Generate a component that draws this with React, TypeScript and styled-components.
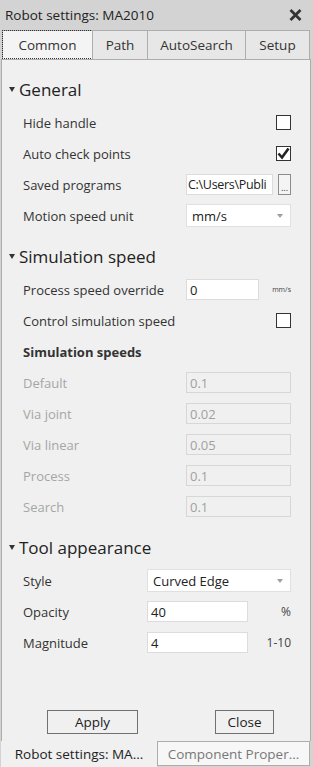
import React from "react";
import styled, { createGlobalStyle } from "styled-components";

const GlobalStyle = createGlobalStyle`
    html, body {
        margin: 0;
        padding: 0;
        background: #d3d3d3;
    }
    * {
        box-sizing: border-box;
    }
`;

const FONT = `"Open Sans", "Noto Sans", sans-serif`;

const Window = styled.div`
    display: flex;
    flex-direction: column;
    width: 313px;
    height: 767px;
    background: #d3d3d3;
    font-family: ${FONT};
    color: #333;
    overflow: hidden;
`;
const TitleBar = styled.div`
    display: flex;
    align-items: center;
    justify-content: space-between;
    height: 29px;
    padding: 0 11px 0 5px;
    font-size: 13.5px;
    color: #222;
`;
const TabStrip = styled.div`
    display: flex;
    align-items: flex-end;
    height: 30px;
    padding-left: 2px;
`;
const Tab = styled.div<{ $w: number; $active?: boolean }>`
    display: flex;
    align-items: center;
    justify-content: center;
    width: ${p => p.$w}px;
    height: 29px;
    font-size: 13.5px;
    color: #333;
    background: ${p => (p.$active ? "#f4f4f4" : "#e7e7e7")};
    border: 1px solid #adadad;
    border-bottom: none;
    margin-left: -1px;
    outline: ${p => (p.$active ? "1px dotted #333" : "none")};
    outline-offset: -1px;
    &:first-child {
        margin-left: 0;
    }
`;
const Panel = styled.div`
    display: flex;
    flex-direction: column;
    flex: 1;
    margin: 0 2px 0 1px;
    padding: 16px 19px 7px 0;
    background: #f0f0f0;
    border: 1px solid #adadad;
    border-bottom: none;
`;
const SectionHeader = styled.div<{ $first?: boolean }>`
    display: flex;
    align-items: center;
    height: 27px;
    margin-top: ${p => (p.$first ? 0 : 12)}px;
    margin-bottom: 4px;
    padding-left: 7px;
    font-size: 17px;
    color: #222;
`;
const Caret = styled.span`
    width: 0;
    height: 0;
    margin-right: 4px;
    border-left: 3.5px solid transparent;
    border-right: 3.5px solid transparent;
    border-top: 5px solid #333;
`;
const Row = styled.div<{ $cw: number }>`
    display: grid;
    grid-template-columns: 1fr ${p => p.$cw}px;
    align-items: center;
    height: 31px;
    padding-left: 21px;
`;
const Label = styled.span<{ $dim?: boolean; $bold?: boolean }>`
    font-size: 13px;
    font-weight: ${p => (p.$bold ? 700 : 400)};
    color: ${p => (p.$dim ? "#a6a6a6" : "#333")};
    white-space: nowrap;
`;
const Controls = styled.div`
    display: flex;
    align-items: center;
    justify-content: space-between;
    gap: 5px;
`;
const TextBox = styled.div<{ $w?: number; $disabled?: boolean; $tight?: boolean }>`
    display: flex;
    align-items: center;
    width: ${p => (p.$w ? `${p.$w}px` : "100%")};
    height: 21px;
    padding: 0 ${p => (p.$tight ? 1 : 3)}px;
    font-size: ${p => (p.$tight ? 12.5 : 13)}px;
    letter-spacing: ${p => (p.$tight ? "-0.3px" : "normal")};
    color: ${p => (p.$disabled ? "#a0a0a0" : "#222")};
    background: ${p => (p.$disabled ? "#f0f0f0" : "#fff")};
    border: 1px solid ${p => (p.$disabled ? "#d7d7d7" : "#dcdcdc")};
    white-space: nowrap;
    overflow: hidden;
`;
const Select = styled.div`
    display: flex;
    align-items: center;
    justify-content: space-between;
    width: 100%;
    height: 23px;
    padding: 0 7px 0 5px;
    font-size: 13px;
    color: #222;
    background: #fff;
    border: 1px solid #e0e0e0;
`;
const SelectArrow = styled.span`
    width: 0;
    height: 0;
    border-left: 3.5px solid transparent;
    border-right: 3.5px solid transparent;
    border-top: 4px solid #a0a0a0;
`;
const Browse = styled.div`
    display: flex;
    align-items: flex-end;
    justify-content: center;
    width: 13px;
    height: 21px;
    padding-bottom: 2px;
    font-size: 9px;
    line-height: 9px;
    color: #333;
    background: #f4f4f4;
    border: 1px solid #8c8c8c;
`;
const CheckBox = styled.div`
    display: flex;
    align-items: center;
    justify-content: center;
    width: 15px;
    height: 15px;
    margin-left: auto;
    background: #fff;
    border: 1px solid #333;
`;
const Unit = styled.span<{ $small?: boolean }>`
    font-size: ${p => (p.$small ? 7 : 12)}px;
    color: #444;
    white-space: nowrap;
`;
const Footer = styled.div`
    display: flex;
    align-items: center;
    margin-top: auto;
    padding-left: 45px;
    gap: 77px;
`;
const Button = styled.div<{ $w: number }>`
    display: flex;
    align-items: center;
    justify-content: center;
    width: ${p => p.$w}px;
    height: 24px;
    font-size: 13.5px;
    color: #222;
    background: #f0f0f0;
    border: 1px solid #707070;
`;
const BottomTabs = styled.div`
    display: flex;
    height: 26px;
    padding-right: 3px;
`;
const BottomTab = styled.div<{ $active?: boolean }>`
    display: flex;
    align-items: center;
    justify-content: center;
    height: ${p => (p.$active ? 26 : 25)}px;
    font-size: 13.5px;
    color: ${p => (p.$active ? "#222" : "#777")};
    background: ${p => (p.$active ? "#f0f0f0" : "#f7f7f7")};
    border: ${p => (p.$active ? "none" : "1px solid #adadad")};
    flex: ${p => (p.$active ? "0 0 156px" : "1")};
    margin-left: ${p => (p.$active ? "1px" : "0")};
    white-space: nowrap;
`;

function CloseIcon() {
    return (
        <svg width="13" height="12" viewBox="0 0 13 12">
            <path d="M1.5 1 L11.5 11 M11.5 1 L1.5 11" stroke="#333" strokeWidth="2.8" />
        </svg>
    );
}

function CheckMark() {
    return (
        <svg width="13" height="13" viewBox="0 0 13 13">
            <path d="M1.5 6.5 L5 10.5 L11.5 1.5" fill="none" stroke="#222" strokeWidth="2.6" />
        </svg>
    );
}

function Header({ title, first }: { title: string; first?: boolean }) {
    return (
        <SectionHeader $first={first}>
            <Caret />
            {title}
        </SectionHeader>
    );
}

const speeds = [
    { label: "Default", value: "0.1" },
    { label: "Via joint", value: "0.02" },
    { label: "Via linear", value: "0.05" },
    { label: "Process", value: "0.1" },
    { label: "Search", value: "0.1" }
];

export default function App() {
    return (
        <>
            <GlobalStyle />
            <Window>
                <TitleBar>
                    <span>Robot settings: MA2010</span>
                    <CloseIcon />
                </TitleBar>
                <TabStrip>
                    <Tab $w={91} $active>Common</Tab>
                    <Tab $w={56}>Path</Tab>
                    <Tab $w={99}>AutoSearch</Tab>
                    <Tab $w={65}>Setup</Tab>
                </TabStrip>
                <Panel>
                    <Header title="General" first />
                    <Row $cw={105}>
                        <Label>Hide handle</Label>
                        <CheckBox />
                    </Row>
                    <Row $cw={105}>
                        <Label>Auto check points</Label>
                        <CheckBox>
                            <CheckMark />
                        </CheckBox>
                    </Row>
                    <Row $cw={105}>
                        <Label>Saved programs</Label>
                        <Controls>
                            <TextBox $w={87} $tight>C:\Users\Publi</TextBox>
                            <Browse>...</Browse>
                        </Controls>
                    </Row>
                    <Row $cw={105}>
                        <Label>Motion speed unit</Label>
                        <Select>
                            mm/s
                            <SelectArrow />
                        </Select>
                    </Row>

                    <Header title="Simulation speed" />
                    <Row $cw={105}>
                        <Label>Process speed override</Label>
                        <Controls>
                            <TextBox $w={73}>0</TextBox>
                            <Unit $small>mm/s</Unit>
                        </Controls>
                    </Row>
                    <Row $cw={105}>
                        <Label>Control simulation speed</Label>
                        <CheckBox />
                    </Row>
                    <Row $cw={105}>
                        <Label $bold>Simulation speeds</Label>
                    </Row>
                    {speeds.map(s => (
                        <Row $cw={105} key={s.label}>
                            <Label $dim>{s.label}</Label>
                            <TextBox $disabled>{s.value}</TextBox>
                        </Row>
                    ))}

                    <Header title="Tool appearance" />
                    <Row $cw={144}>
                        <Label>Style</Label>
                        <Select>
                            Curved Edge
                            <SelectArrow />
                        </Select>
                    </Row>
                    <Row $cw={144}>
                        <Label>Opacity</Label>
                        <Controls>
                            <TextBox $w={101}>40</TextBox>
                            <Unit>%</Unit>
                        </Controls>
                    </Row>
                    <Row $cw={144}>
                        <Label>Magnitude</Label>
                        <Controls>
                            <TextBox $w={101}>4</TextBox>
                            <Unit>1-10</Unit>
                        </Controls>
                    </Row>

                    <Footer>
                        <Button $w={91}>Apply</Button>
                        <Button $w={59}>Close</Button>
                    </Footer>
                </Panel>
                <BottomTabs>
                    <BottomTab $active>Robot settings: MA...</BottomTab>
                    <BottomTab>Component Proper...</BottomTab>
                </BottomTabs>
            </Window>
        </>
    );
}
